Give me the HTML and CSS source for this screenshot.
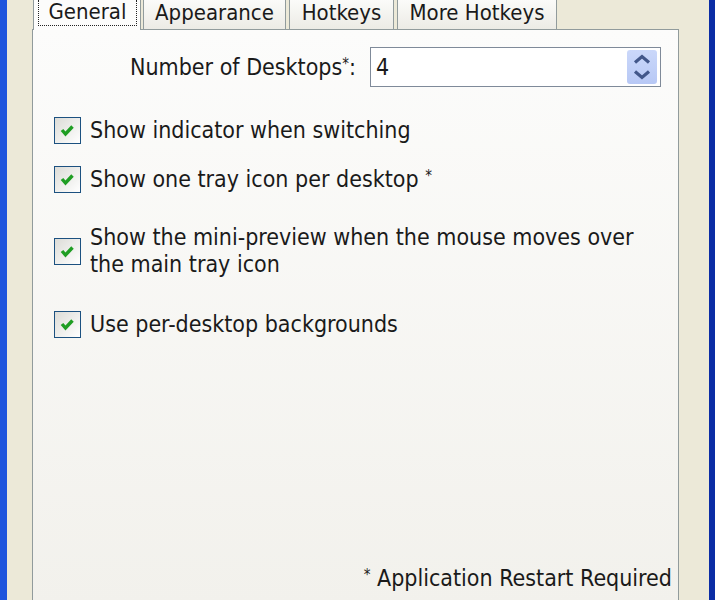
FILE: index.html
```html
<!DOCTYPE html>
<html>
<head>
<meta charset="utf-8">
<link rel="stylesheet" href="styles.css">
</head>
<body>
<div class="window">
  <div class="tabs">
    <div class="tab tab-general selected"><span class="focus">General</span></div>
    <div class="tab tab-appearance">Appearance</div>
    <div class="tab tab-hotkeys">Hotkeys</div>
    <div class="tab tab-more">More Hotkeys</div>
  </div>
  <div class="page">
    <div class="num-row">
      <label class="num-label">Number of Desktops<sup class="ast">*</sup>:</label>
      <div class="spin-input">
        <span class="val">4</span>
        <div class="spin">
          <svg width="30" height="34" viewBox="0 0 30 34">
            <path d="M8 12.5 L15 6.5 L22 12.5" fill="none" stroke="#42578a" stroke-width="3.2"/>
            <path d="M8 21.5 L15 27.5 L22 21.5" fill="none" stroke="#42578a" stroke-width="3.2"/>
          </svg>
        </div>
      </div>
    </div>
    <ul class="checks">
      <li class="check c1"><span class="box"><svg width="25" height="25" viewBox="0 0 25 25"><path d="M7 12 L10.5 16 L17.5 8.5" fill="none" stroke="#1f9e23" stroke-width="3.4"/></svg></span><span class="lbl">Show indicator when switching</span></li>
      <li class="check c2"><span class="box"><svg width="25" height="25" viewBox="0 0 25 25"><path d="M7 12 L10.5 16 L17.5 8.5" fill="none" stroke="#1f9e23" stroke-width="3.4"/></svg></span><span class="lbl">Show one tray icon per desktop <sup class="ast">*</sup></span></li>
      <li class="check c3"><span class="box"><svg width="25" height="25" viewBox="0 0 25 25"><path d="M7 12 L10.5 16 L17.5 8.5" fill="none" stroke="#1f9e23" stroke-width="3.4"/></svg></span><span class="lbl wrap">Show the mini-preview when the mouse moves over the main tray icon</span></li>
      <li class="check c4"><span class="box"><svg width="25" height="25" viewBox="0 0 25 25"><path d="M7 12 L10.5 16 L17.5 8.5" fill="none" stroke="#1f9e23" stroke-width="3.4"/></svg></span><span class="lbl">Use per-desktop backgrounds</span></li>
    </ul>
    <div class="footer"><sup class="ast">*</sup> Application Restart Required</div>
  </div>
</div>
</body>
</html>
```

FILE: styles.css
```css
html, body {
  margin: 0;
  padding: 0;
}
body {
  width: 715px;
  height: 600px;
  overflow: hidden;
  font-family: "DejaVu Sans Condensed", "DejaVu Sans", sans-serif;
  font-stretch: condensed;
  font-size: 23px;
  color: #1a1a1a;
}
.window {
  box-sizing: border-box;
  height: 600px;
  background: #ece9d8;
  border-left: 7px solid #1f55dd;
  border-right: 6px solid #0b2da5;
  padding: 0 30px 0 25px;
}
.tabs {
  display: flex;
  height: 29px;
  position: relative;
  z-index: 2;
  font-size: 22px;
}
.tab {
  box-sizing: border-box;
  height: 29px;
  border-left: 1px solid #919b9c;
  border-right: 1px solid #919b9c;
  background: linear-gradient(#fbfbf9, #ecebe5);
  text-align: center;
  line-height: 26px;
  white-space: nowrap;
}
.tab-general {
  width: 108px;
  margin-left: 1px;
  height: 30px;
  background: #fcfcfb;
  padding: 0 3px 0 4px;
}
.focus {
  display: block;
  border: 1px dotted #222;
  border-top: none;
  height: 26px;
  box-sizing: border-box;
  line-height: 24px;
}
.tab-appearance { width: 143px; margin-left: 2px; }
.tab-hotkeys { width: 105px; margin-left: 3px; }
.tab-more { width: 160px; margin-left: 3px; }
.page {
  box-sizing: border-box;
  height: 576px;
  border: 1px solid #919b9c;
  background: linear-gradient(#fcfcfb, #f2f1ec);
  display: flex;
  flex-direction: column;
  padding: 17px 6px 12px 21px;
}
.num-row {
  display: flex;
  align-items: center;
  height: 40px;
}
.num-label {
  width: 302px;
  text-align: right;
  margin-right: 14px;
}
.spin-input {
  box-sizing: border-box;
  width: 291px;
  height: 40px;
  border: 1px solid #7f8a99;
  background: #fff;
  display: flex;
  align-items: center;
  justify-content: space-between;
  padding: 0 3px 0 5px;
}
.spin {
  width: 30px;
  height: 34px;
  background: linear-gradient(#cbd8fa, #b7c8f5);
  border-radius: 3px;
}
.spin svg { display: block; }
.checks {
  list-style: none;
  margin: 30px 0 0;
  padding: 0;
}
.check {
  display: flex;
  align-items: center;
  line-height: 27px;
}
.c2 { margin-top: 22px; }
.c3 { margin-top: 31px; }
.c4 { margin-top: 33px; }
.box {
  box-sizing: border-box;
  flex: none;
  width: 27px;
  height: 27px;
  border: 1px solid #1c5180;
  background: linear-gradient(135deg, #dcdcd7, #ffffff);
  margin-right: 9px;
}
.box svg { display: block; }
.wrap { width: 560px; }
.ast {
  font-size: 15px;
  line-height: 0;
  vertical-align: 6px;
}
.footer {
  margin-top: auto;
  text-align: right;
  line-height: 27px;
}
```
